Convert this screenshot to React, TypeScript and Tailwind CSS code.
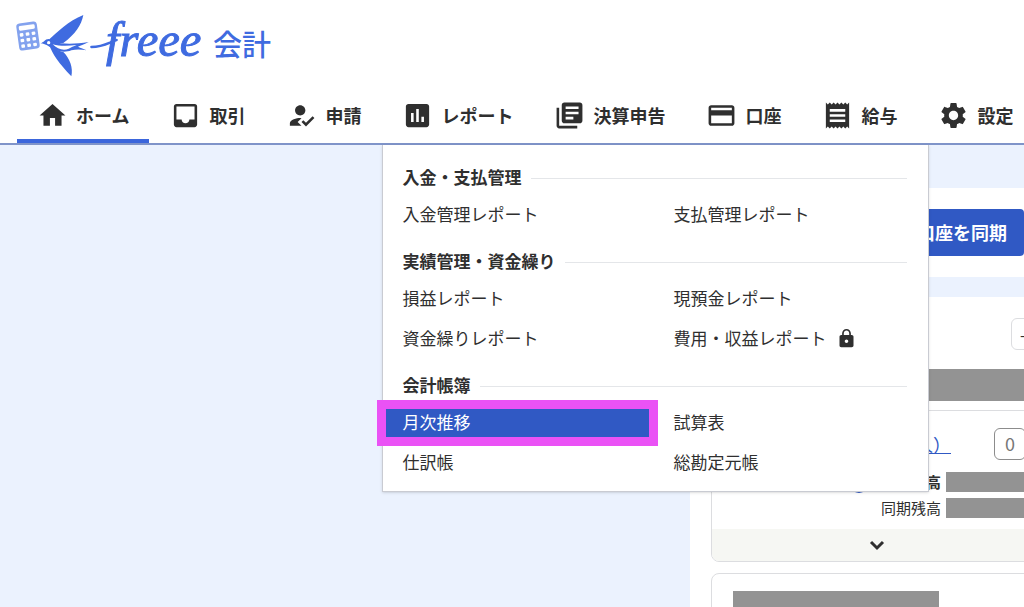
import React from "react";
import type { IconType } from "react-icons";
import { ChevronDown } from "lucide-react";
import {
  MdAssessment,
  MdCreditCard,
  MdHome,
  MdHowToReg,
  MdInbox,
  MdLibraryBooks,
  MdLock,
  MdReceipt,
  MdSettings,
} from "react-icons/md";

interface NavItem {
  label: string;
  icon: IconType;
  active?: boolean;
  menu?: boolean;
}

interface MenuLink {
  label: string;
  locked?: boolean;
  selected?: boolean;
}

interface MenuSection {
  title: string;
  links: MenuLink[];
}

const navItems: NavItem[] = [
  { label: "ホーム", icon: MdHome, active: true },
  { label: "取引", icon: MdInbox },
  { label: "申請", icon: MdHowToReg },
  { label: "レポート", icon: MdAssessment, menu: true },
  { label: "決算申告", icon: MdLibraryBooks },
  { label: "口座", icon: MdCreditCard },
  { label: "給与", icon: MdReceipt },
  { label: "設定", icon: MdSettings },
];

const menuSections: MenuSection[] = [
  {
    title: "入金・支払管理",
    links: [{ label: "入金管理レポート" }, { label: "支払管理レポート" }],
  },
  {
    title: "実績管理・資金繰り",
    links: [
      { label: "損益レポート" },
      { label: "現預金レポート" },
      { label: "資金繰りレポート" },
      { label: "費用・収益レポート", locked: true },
    ],
  },
  {
    title: "会計帳簿",
    links: [
      { label: "月次推移", selected: true },
      { label: "試算表" },
      { label: "仕訳帳" },
      { label: "総勘定元帳" },
    ],
  },
];

const Logo: React.FC = () => (
  <a href="#home" className="flex h-[88px] items-start gap-2 text-[#3f6be0]">
    <svg viewBox="0 0 615 252" className="h-[84px] w-[205px] shrink-0" fill="currentColor">
      {/* calculator */}
      <g transform="rotate(-8 84 108)">
        <rect x="53" y="67" width="62" height="82" rx="10" fill="#83a2ee" />
        <rect x="60" y="75" width="48" height="14" rx="4" fill="#fff" />
        {[97, 114, 131].map((y) =>
          [60, 78, 96].map((x) => (
            <rect key={`${x}-${y}`} x={x} y={y} width="11" height="10" rx="3" fill="#fff" />
          ))
        )}
      </g>
      {/* swallow */}
      <path d="M148 118C168 100 206 62 250 45C244 76 226 102 190 129L158 129Z" />
      <path d="M148 134C156 162 178 190 214 229C220 204 210 176 190 156C172 152 160 144 156 134Z" />
      <path d="M121 130C132 128 134 117 146 117C154 117 157 123 162 126C190 133 228 132 266 126C254 132 242 137 234 140C242 144 252 147 260 151C242 148 228 148 214 151C192 160 164 154 146 139C138 134 130 131 121 130Z" />
      <path d="M158 133C180 139 205 138 230 135C220 139 214 142 206 146C190 153 172 147 158 133Z" fill="#fff" />
      <circle cx="146" cy="128" r="5" fill="#fff" />
      <path
        d="M274 141C296 141 312 136 330 128C338 124 344 121 350 120"
        fill="none"
        stroke="currentColor"
        strokeWidth="7"
        strokeLinecap="round"
      />
      <text
        x="318"
        y="168"
        fontSize="146"
        stroke="currentColor"
        strokeWidth="3"
        className="font-['Liberation_Serif',serif] italic"
      >
        freee
      </text>
    </svg>
    <span className="mt-[23px] text-[29px] leading-10 font-medium">会計</span>
  </a>
);

const ReportMenu: React.FC = () => (
  <div className="absolute top-full left-0 z-10 mt-[2px] flex w-[547px] flex-col gap-[21px] border border-t-0 border-[#c9cbd2] bg-white pt-[21px] pb-[14px] shadow-sm">
    {menuSections.map((section) => (
      <section key={section.title}>
        <div className="flex items-center gap-[10px] pr-[21px] pl-[19px]">
          <h2 className="pb-0.5 text-[17px] leading-[22px] font-bold">{section.title}</h2>
          <div className="h-px flex-1 bg-[#e4e6e9]" />
        </div>
        <ul className="mt-[11px] grid grid-cols-2 gap-x-2 gap-y-3 pr-2 pl-[3px]">
          {section.links.map((link) => (
            <li key={link.label}>
              <a
                href="#report"
                className={
                  link.selected
                    ? "flex h-7 items-center bg-[#3059c4] pb-0.5 pl-4 text-[17px] text-white outline-[9px] outline-[#ea52f5] outline-solid"
                    : "flex h-7 items-center gap-[10px] pb-0.5 pl-4 text-[17px]"
                }
              >
                {link.label}
                {link.locked && <MdLock className="size-[21px]" />}
              </a>
            </li>
          ))}
        </ul>
      </section>
    ))}
  </div>
);

const Header: React.FC = () => (
  <header className="relative z-10 border-b-2 border-[#7f94c9] bg-white">
    <Logo />
    <nav>
      <ul className="flex gap-px pl-[17px]">
        {navItems.map(({ label, icon: Icon, active, menu }) => (
          <li key={label} className="relative shrink-0">
            <button
              type="button"
              className={
                active
                  ? "flex h-[55px] items-center gap-2 border-b-4 border-b-[#3b66dc] px-5 pt-1 text-lg font-bold"
                  : "flex h-[55px] items-center gap-2 border-b-4 border-transparent px-5 pt-1 text-lg font-bold"
              }
            >
              <Icon className="size-[31px]" />
              <span className="pb-0.5">{label}</span>
            </button>
            {menu && <ReportMenu />}
          </li>
        ))}
      </ul>
    </nav>
  </header>
);

const AccountCard: React.FC = () => (
  <article className="overflow-hidden rounded-lg border border-[#dcdde0]">
    <div className="flex items-center justify-end gap-[43px] pt-[17px] pr-4">
      <a href="#account" className="text-lg leading-6 text-[#3059c4] underline underline-offset-1">
        口座（法人）
      </a>
      <button
        type="button"
        className="h-8 w-8 rounded-md border border-[#8c8c8c] pb-0.5 text-lg leading-6 text-[#777]"
      >
        0
      </button>
    </div>
    <dl className="mt-[11px] grid grid-cols-[1fr_96px] gap-x-[5px] gap-y-1 text-right text-[15px] leading-[22px]">
      <dt className="flex items-center justify-end gap-[13px] font-bold">
        <span className="mt-1 size-[18px] rounded-full bg-[#3059c4]" />
        登録残高
      </dt>
      <dd className="my-px bg-[#939393]" />
      <dt>同期残高</dt>
      <dd className="my-px bg-[#939393]" />
    </dl>
    <button
      type="button"
      aria-label="明細を開く"
      className="mt-[10px] flex h-8 w-full items-center justify-center bg-[#f6f7f3]"
    >
      <ChevronDown className="size-6" strokeWidth={3} strokeLinecap="butt" strokeLinejoin="miter" />
    </button>
  </article>
);

const Sidebar: React.FC = () => (
  <aside className="-mr-10 w-[374px] shrink-0 pt-[43px]">
    <div className="flex justify-end bg-white py-[21px] pr-10">
      <button
        type="button"
        className="h-[47px] rounded bg-[#3059c4] px-[17px] pb-0.5 text-lg font-bold text-white"
      >
        口座を同期
      </button>
    </div>
    <div className="mt-5 bg-white px-[21px] pt-[21px] pb-6">
      <div className="flex justify-end">
        <button
          type="button"
          className="h-8 w-8 rounded-md border border-[#dcdde0] pl-2 text-left text-base"
        >
          -
        </button>
      </div>
      <div className="mt-[19px] h-8 bg-[#939393]" />
      <div className="mt-[9px] flex flex-col gap-[11px]">
        <AccountCard />
        <article className="rounded-lg border border-[#dcdde0] px-[21px] py-[17px]">
          <div className="h-8 w-[206px] bg-[#939393]" />
        </article>
      </div>
    </div>
  </aside>
);

const App: React.FC = () => {
  return (
    <div className="flex h-screen flex-col overflow-hidden bg-[#ebf2fe] font-['Noto_Sans_CJK_JP',sans-serif] text-[#2f2f2f]">
      <Header />
      <div className="flex flex-1">
        <main className="flex-1" />
        <Sidebar />
      </div>
    </div>
  );
};

export default App;
